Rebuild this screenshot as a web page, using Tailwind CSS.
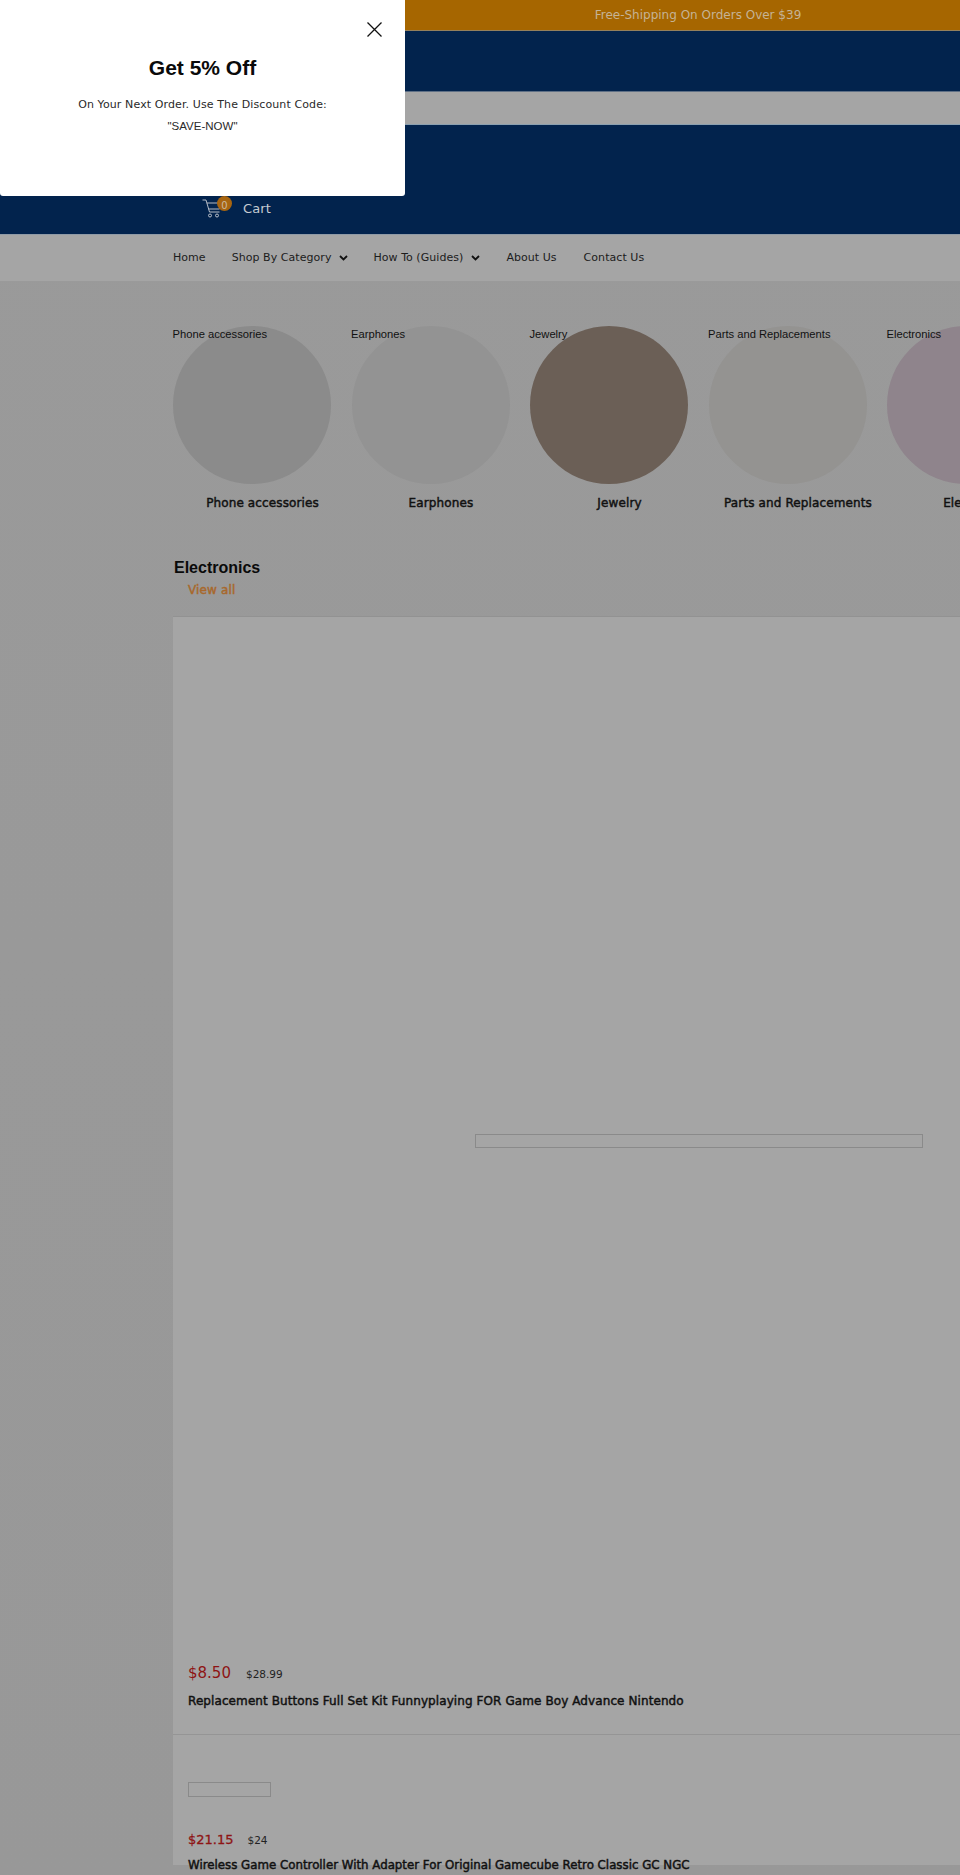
<!doctype html>
<html><head><meta charset="utf-8"><title>Store</title>
<script src="https://cdn.jsdelivr.net/npm/@tailwindcss/browser@4"></script></head>
<body class="m-0">
<div class="relative w-[960px] h-[1875px] overflow-hidden bg-gradient-to-b from-[#9a9a9a] to-[#989898] font-['DejaVu_Sans',sans-serif]">
  <div class="h-[31px] bg-[#a66600] border-b border-[#94805c] flex items-center justify-center pl-[436px] pb-px text-[12px] text-[#c5b395]">
    <span class="w-[524px] text-center">Free-Shipping On Orders Over $39</span>
  </div>
  <div class="h-[60px] bg-[#02234d]"></div>
  <div class="h-[34px] bg-[#a5a5a5] border-t border-t-[#5e6f85] border-b border-b-[#8ba0b0]"></div>
  <div class="h-[109px] bg-[#02234d] flex items-end pl-[202px] pb-[16px]">
    <div class="relative flex items-center gap-[21px]">
      <svg class="w-[20px] h-[19px]" viewBox="0 0 20 19" fill="none" stroke="#c8ccd2" stroke-width="0.900"><path d="M.5 1h3.500l3.500 12h10"/><path d="M4.800 4h14.500l-1.800 6H6.500"/><circle cx="8" cy="16.500" r="1.500"/><circle cx="15" cy="16.500" r="1.500"/></svg>
      <span class="absolute left-[15px] top-[-3px] w-[15px] h-[15px] rounded-full bg-[#a86510] text-[#c8b8a0] text-[10px] leading-[19px] text-center">0</span>
      <span class="text-[13px] tracking-[0.1px] text-[#c6cbd2]">Cart</span>
    </div>
  </div>
  <nav class="h-[47px] bg-[#a5a5a5] border-t border-[#8f9aa6] flex items-center pl-[173px] text-[11px] tracking-[0.05px] text-[#1c1c1c]">
    <a class="mr-[26px]">Home</a>
    <a class="mr-[25px] flex items-center gap-[8px]">Shop By Category <svg class="w-[9px] h-[6px]" viewBox="0 0 9 6" fill="none" stroke="#111" stroke-width="1.800"><path d="M1 1l3.500 3.500L8 1"/></svg></a>
    <a class="mr-[26px] flex items-center gap-[8px]">How To (Guides) <svg class="w-[9px] h-[6px]" viewBox="0 0 9 6" fill="none" stroke="#111" stroke-width="1.800"><path d="M1 1l3.500 3.500L8 1"/></svg></a>
    <a class="mr-[27px]">About Us</a>
    <a>Contact Us</a>
  </nav>
  <section class="flex gap-[20.500px] pl-[173px] pt-[45px] w-[1200px]">
    <div class="relative w-[158px] shrink-0"><span class="absolute left-[-0.500px] top-0 text-[11.200px] font-['Liberation_Sans',sans-serif] text-[#111]">Phone accessories</span><div class="w-[158px] h-[158px] rounded-full bg-[#8b8b8b]"></div><p class="mt-[10px] pl-[21px] text-center text-[12px] tracking-[0.12px] [-webkit-text-stroke:0.450px_#111] whitespace-nowrap text-[#111] w-[178px] -ml-[10px]">Phone accessories</p></div>
    <div class="relative w-[158px] shrink-0"><span class="absolute left-[-0.500px] top-0 text-[11.200px] font-['Liberation_Sans',sans-serif] text-[#111]">Earphones</span><div class="w-[158px] h-[158px] rounded-full bg-[#939393]"></div><p class="mt-[10px] pl-[21px] text-center text-[12px] tracking-[0.12px] [-webkit-text-stroke:0.450px_#111] whitespace-nowrap text-[#111] w-[178px] -ml-[10px]">Earphones</p></div>
    <div class="relative w-[158px] shrink-0"><span class="absolute left-[-0.500px] top-0 text-[11.200px] font-['Liberation_Sans',sans-serif] text-[#111]">Jewelry</span><div class="w-[158px] h-[158px] rounded-full bg-[#6b5f56]"></div><p class="mt-[10px] pl-[21px] text-center text-[12px] tracking-[0.12px] [-webkit-text-stroke:0.450px_#111] whitespace-nowrap text-[#111] w-[178px] -ml-[10px]">Jewelry</p></div>
    <div class="relative w-[158px] shrink-0"><span class="absolute left-[-0.500px] top-0 text-[11.200px] font-['Liberation_Sans',sans-serif] text-[#111]">Parts and Replacements</span><div class="w-[158px] h-[158px] rounded-full bg-[#949391]"></div><p class="mt-[10px] pl-[21px] text-center text-[12px] tracking-[0.12px] [-webkit-text-stroke:0.450px_#111] whitespace-nowrap text-[#111] w-[178px] -ml-[10px]">Parts and Replacements</p></div>
    <div class="relative w-[158px] shrink-0"><span class="absolute left-[-0.500px] top-0 text-[11.200px] font-['Liberation_Sans',sans-serif] text-[#111]">Electronics</span><div class="w-[158px] h-[158px] rounded-full bg-[#8f848c]"></div><p class="mt-[10px] pl-[21px] text-center text-[12px] tracking-[0.12px] [-webkit-text-stroke:0.450px_#111] whitespace-nowrap text-[#111] w-[178px] -ml-[10px]">Electronics</p></div>
  </section>
  <div class="pl-[174px] pt-[46px]">
    <h2 class="text-[16px] leading-[20px] font-bold font-['Liberation_Sans',sans-serif] text-[#0a0a0a]">Electronics</h2>
    <a class="block pl-[14px] mt-[4px] text-[12px] leading-[16px] tracking-[0.15px] [-webkit-text-stroke:0.450px_#a8682c] text-[#a8682c]">View all</a>
  </div>
  <section class="ml-[173px] mt-[18px] bg-[#a5a5a5] border-t border-[#929292]">
    <div class="relative h-[1118px] border-b border-[#959595]">
      <div class="absolute left-[302px] top-[517px] w-[448px] h-[14px] border border-[#8a8a8a]"></div>
      <div class="absolute left-[15px] top-[1045px] flex items-baseline gap-[15px]"><span class="text-[15px] text-[#8e1414]">$8.50</span><span class="text-[10.500px] text-[#222]">$28.99</span></div>
      <h3 class="absolute left-[15px] top-[1075px] text-[12px] tracking-[0.09px] [-webkit-text-stroke:0.450px_#111] whitespace-nowrap text-[#111]">Replacement Buttons Full Set Kit Funnyplaying FOR Game Boy Advance Nintendo</h3>
    </div>
    <div class="relative h-[130px]">
      <div class="absolute left-[15px] top-[47px] w-[83px] h-[15px] border border-[#8a8a8a]"></div>
      <div class="absolute left-[15px] top-[95px] flex items-baseline gap-[14px]"><span class="text-[13px] [-webkit-text-stroke:0.300px_#8e1414] text-[#8e1414]">$21.15</span><span class="text-[10.500px] text-[#222]">$24</span></div>
      <h3 class="absolute left-[15px] top-[122px] text-[11.800px] [-webkit-text-stroke:0.450px_#111] whitespace-nowrap text-[#111]">Wireless Game Controller With Adapter For Original Gamecube Retro Classic GC NGC</h3>
    </div>
  </section>
  <div class="absolute left-0 top-0 w-[405px] h-[196px] bg-white rounded-b-[3px] text-center">
    <svg class="absolute left-[367px] top-[22px] w-[15px] h-[15px]" viewBox="0 0 15 15" fill="none" stroke="#111" stroke-width="1.300"><path d="M.5.500l14 14M14.500.500l-14 14"/></svg>
    <h2 class="pt-[55px] text-[21px] leading-[25px] font-bold font-['Liberation_Sans',sans-serif] text-[#0a0a0a]">Get 5% Off</h2>
    <p class="mt-[14px] text-[11px] tracking-[0.11px] leading-[22px] text-[#2a2a2a]">On Your Next Order. Use The Discount Code:</p>
    <p class="text-[11.500px] leading-[21px] font-['Liberation_Sans',sans-serif] text-[#2a2a2a]">"SAVE-NOW"</p>
  </div>
</div>
</body></html>
